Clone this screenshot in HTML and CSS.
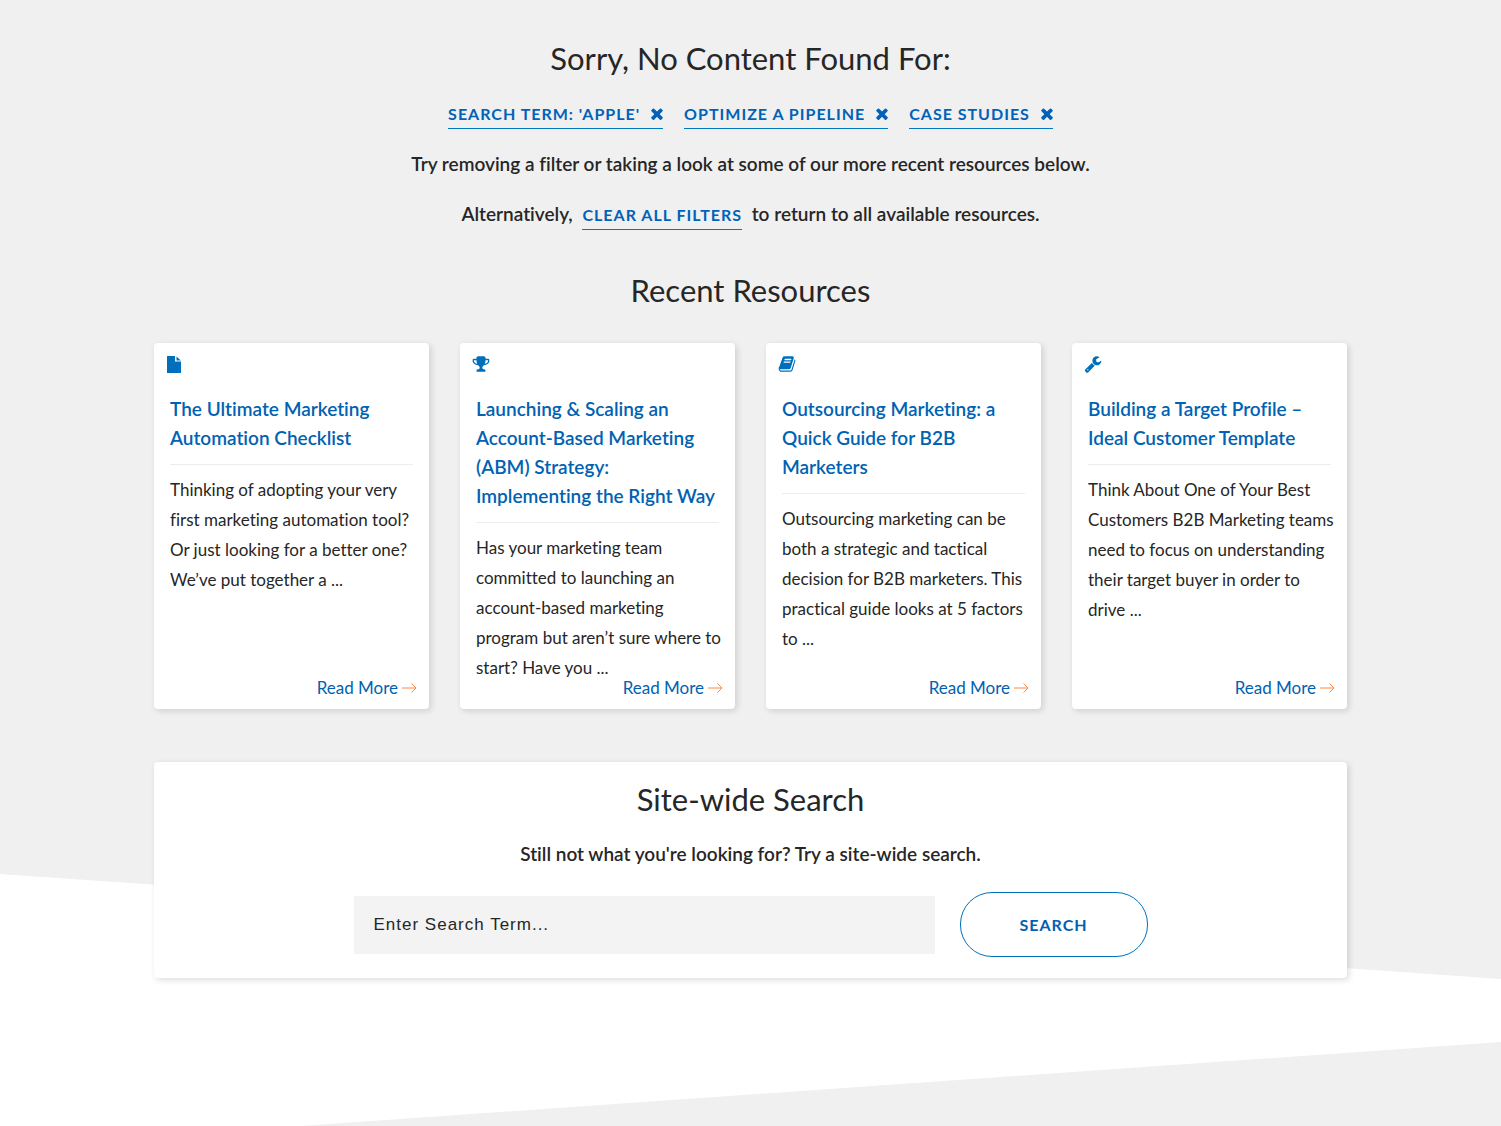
FILE: index.html
```html
<!DOCTYPE html>
<html lang="en">
<head>
<meta charset="utf-8">
<meta name="viewport" content="width=device-width, initial-scale=1">
<title>No Content Found</title>
<link rel="stylesheet" href="styles.css">
</head>
<body>
<svg class="sprite" aria-hidden="true">
  <symbol id="times" viewBox="302 322 1188 1232"><path d="M1490 1322q0 40-28 68l-136 136q-28 28-68 28t-68-28l-294-294-294 294q-28 28-68 28t-68-28l-136-136q-28-28-28-68t28-68l294-294-294-294q-28-28-28-68t28-68l136-136q28-28 68-28t68 28l294 294 294-294q28-28 68-28t68 28l136 136q28 28 28 68t-28 68l-294 294 294 294q28 28 28 68z"/></symbol>
  <symbol id="file" viewBox="0 0 18 18"><path d="M1 1.500a.5.500 0 0 1 .5-.5H9v5.500h6V17.500a.5.500 0 0 1-.5.500h-13a.5.500 0 0 1-.5-.5zM10.500 1.500 14.800 5.500H10.500z"/></symbol>
  <symbol id="trophy" viewBox="0 0 1792 1792"><path d="M522 883q-74-162-74-371h-256v96q0 78 94.500 162t235.500 113zm1078-275v-96h-256q0 209-74 371 141-29 235.500-113t94.500-162zm128-128v128q0 71-41.500 143t-112 130-173 97.500-215.500 44.500q-42 54-95 95-38 34-52.500 72.500t-14.500 89.500q0 54 30.500 91t97.500 37q75 0 133.500 45.500t58.500 114.500v64q0 14-9 23t-23 9h-832q-14 0-23-9t-9-23v-64q0-69 58.500-114.500t133.500-45.500q67 0 97.500-37t30.500-91q0-51-14.500-89.500t-52.500-72.500q-53-41-95-95-113-5-215.500-44.500t-173-97.500-112-130-41.500-143v-128q0-40 28-68t68-28h288v-96q0-66 47-113t113-47h576q66 0 113 47t47 113v96h288q40 0 68 28t28 68z"/></symbol>
  <symbol id="book" viewBox="0 0 1792 1792"><path d="M1703 478q40 57 18 129l-275 906q-19 64-76.500 107.500t-122.500 43.500h-923q-77 0-148.500-53.500t-99.500-131.500q-24-67-2-127 0-4 3-27t4-37q1-8-3-21.500t-3-19.500q2-11 8-21t16.500-23.500 16.500-23.500q23-38 45-91.500t30-91.500q3-10 .5-30t-.5-28q3-11 17-28t17-23q21-36 42-92t25-90q1-9-2.500-32t.5-28q4-13 22-30.500t22-22.500q19-26 42.500-84.500t27.500-96.500q1-8-3-25.500t-2-26.500q2-8 9-18t18-23 17-21q8-12 16.500-30.500t15-35 16-36 19.500-32 26.500-23.500 36-11.500 47.500 5.500l-1 3q38-9 51-9h761q74 0 114 56t18 130l-274 906q-36 119-71.500 153.500t-128.500 34.500h-869q-27 0-38 15-11 16-1 43 24 70 144 70h923q29 0 56-15.500t35-41.500l300-987q7-22 5-57 38 15 59 43zm-1064 2q-4 13 2 22.500t20 9.500h608q13 0 25.500-9.500t16.500-22.500l21-64q4-13-2-22.500t-20-9.500h-608q-13 0-25.500 9.500t-16.500 22.500zm-83 256q-4 13 2 22.500t20 9.500h608q13 0 25.500-9.500t16.500-22.500l21-64q4-13-2-22.500t-20-9.500h-608q-13 0-25.500 9.500t-16.500 22.500z"/></symbol>
  <symbol id="wrench" viewBox="0 0 1792 1792"><path d="M448 1472q0-26-19-45t-45-19-45 19-19 45 19 45 45 19 45-19 19-45zm644-420l-682 682q-37 37-90 37-52 0-91-37l-106-108q-38-36-38-90 0-53 38-91l681-681q39 98 114.500 173.500t173.500 114.500zm634-435q0 39-23 106-47 134-164.500 217.500t-258.500 83.500q-185 0-316.500-131.500t-131.500-316.500 131.500-316.500 316.500-131.500q58 0 121.500 16.500t107.500 46.500q16 11 16 28t-16 28l-293 169v224l193 107q5-3 79-48.500t135.500-81 70.500-35.500q15 0 23.500 10t8.500 25z"/></symbol>
  <symbol id="arrow" viewBox="0 0 15 10"><path d="M0 5H14M9.500 .5 14 5 9.500 9.500"/></symbol>
</svg>

<main class="results">
  <div class="container">
    <h1 class="heading">Sorry, No Content Found For:</h1>
    <ul class="filters">
      <li><a class="tag" href="#">Search Term: 'Apple'<svg class="tag-icon"><use href="#times"/></svg></a></li>
      <li><a class="tag" href="#">Optimize a Pipeline<svg class="tag-icon"><use href="#times"/></svg></a></li>
      <li><a class="tag" href="#">Case Studies<svg class="tag-icon"><use href="#times"/></svg></a></li>
    </ul>
    <p class="note">Try removing a filter or taking a look at some of our more recent resources below.</p>
    <p class="note">Alternatively, <a class="tag clear" href="#">Clear All Filters</a> to return to all available resources.</p>

    <h2 class="heading recent">Recent Resources</h2>
    <div class="cards">
      <article class="card">
        <svg class="card-icon"><use href="#file"/></svg>
        <h3 class="card-title"><a href="#">The Ultimate Marketing Automation Checklist</a></h3>
        <p class="card-text">Thinking of adopting your very first marketing automation tool? Or just looking for a better one? We’ve put together a ...</p>
        <a class="more" href="#">Read More<svg class="arrow"><use href="#arrow"/></svg></a>
      </article>
      <article class="card">
        <svg class="card-icon"><use href="#trophy"/></svg>
        <h3 class="card-title"><a href="#">Launching &amp; Scaling an Account-Based Marketing (ABM) Strategy: Implementing the Right Way</a></h3>
        <p class="card-text">Has your marketing team committed to launching an account-based marketing program but aren’t sure where to start? Have you ...</p>
        <a class="more" href="#">Read More<svg class="arrow"><use href="#arrow"/></svg></a>
      </article>
      <article class="card">
        <svg class="card-icon"><use href="#book"/></svg>
        <h3 class="card-title"><a href="#">Outsourcing Marketing: a Quick Guide for B2B Marketers</a></h3>
        <p class="card-text">Outsourcing marketing can be both a strategic and tactical decision for B2B marketers. This practical guide looks at 5 factors to ...</p>
        <a class="more" href="#">Read More<svg class="arrow"><use href="#arrow"/></svg></a>
      </article>
      <article class="card">
        <svg class="card-icon"><use href="#wrench"/></svg>
        <h3 class="card-title"><a href="#">Building a Target Profile – Ideal Customer Template</a></h3>
        <p class="card-text">Think About One of Your Best Customers B2B Marketing teams need to focus on understanding their target buyer in order to drive ...</p>
        <a class="more" href="#">Read More<svg class="arrow"><use href="#arrow"/></svg></a>
      </article>
    </div>

    <section class="panel">
      <h2 class="heading">Site-wide Search</h2>
      <p class="note">Still not what you're looking for? Try a site-wide search.</p>
      <form class="search">
        <input class="search-input" type="search" placeholder="Enter Search Term..." aria-label="Search term">
        <button class="search-button" type="submit">Search</button>
      </form>
    </section>
  </div>
</main>
<footer class="footer"></footer>
</body>
</html>
```
FILE: styles.css
```css
* {
  box-sizing: border-box;
}

body {
  margin: 0;
  background: #fff;
  color: #262626;
  font-family: Lato, "Open Sans", sans-serif;
  font-size: 17px;
  font-variant-ligatures: none;
  line-height: 30px;
}

.sprite {
  display: none;
}

/* Grey backdrop with a sloped lower edge */
.results {
  position: relative;
  padding: 38px 16px 0;
}

.results::before {
  content: "";
  position: absolute;
  inset: 0 0 -1px;
  z-index: -1;
  background: #f0f0f0;
  clip-path: polygon(0 0, 100% 0, 100% 100%, 0 calc(100% - 7vw));
}

.container {
  max-width: 1193px;
  margin: 0 auto;
}

.heading {
  margin: 0;
  font-size: 31px;
  font-weight: 400;
  line-height: 40px;
  text-align: center;
}

.filters {
  display: flex;
  flex-wrap: wrap;
  justify-content: center;
  gap: 21px;
  margin: 26px 0 20px;
  padding: 0;
  list-style: none;
}

.tag {
  border-bottom: 1px solid #0078c1;
  color: #0062b8;
  font-size: 16px;
  font-weight: 700;
  letter-spacing: 1px;
  text-decoration: none;
  text-transform: uppercase;
}

.filters .tag {
  display: flex;
  align-items: center;
  gap: 11px;
  padding-bottom: 4px;
  line-height: 20px;
}

.tag-icon {
  width: 12px;
  height: 12px;
  fill: #0062b8;
}

.clear {
  margin: 0 5px;
  padding-bottom: 5px;
}

.note {
  margin: 20px 0;
  font-size: 19px;
  font-weight: 600;
  text-align: center;
}

.recent {
  margin: 40px 0 33px;
}

.cards {
  display: grid;
  grid-template-columns: repeat(auto-fit, minmax(260px, 1fr));
  gap: 31px;
}

.card,
.panel {
  border-radius: 4px;
  background: #fff;
  box-shadow: 2px 2px 6px rgba(0, 0, 0, 0.14);
}

.card {
  display: flex;
  flex-direction: column;
  padding: 12px 12px 6px;
}

.card-icon {
  width: 18px;
  height: 18px;
  margin-bottom: 21px;
  fill: #006fbb;
}

.card-title {
  margin: 0 4px 10px;
  padding-bottom: 12px;
  border-bottom: 1px solid #ededed;
  font-size: 19px;
  font-weight: 600;
  line-height: 29px;
}

.card-title a {
  color: #0062b2;
  text-decoration: none;
}

/* The link may share the last text line's row */
.card-text {
  margin: 0 0 -10px 4px;
}

.more {
  display: flex;
  align-items: center;
  align-self: flex-end;
  gap: 4px;
  margin-top: auto;
  color: #0062b2;
  text-decoration: none;
}

.arrow {
  width: 15px;
  height: 10px;
  fill: none;
  stroke: #ff8a3d;
}

.panel {
  margin-top: 53px;
  padding: 17px 16px 21px;
}

.search {
  display: flex;
  align-items: center;
  gap: 25px;
  max-width: 794px;
  margin: 23px auto 0;
}

.search-input {
  flex: 1;
  min-width: 0;
  height: 58px;
  padding: 0 20px;
  border: 0;
  background: #f3f3f3;
  font-family: "Liberation Sans", Arial, sans-serif;
  font-size: 17px;
  letter-spacing: 1px;
}

.search-input::placeholder {
  color: #262626;
}

.search-button {
  width: 188px;
  height: 65px;
  border: 1px solid #0072bc;
  border-radius: 32px;
  background: #fff;
  color: #0062b2;
  font: 700 16px Lato, "Open Sans", sans-serif;
  letter-spacing: 1px;
  text-transform: uppercase;
}

.footer {
  min-height: 84px;
  margin-top: 64px;
  background: #f0f0f0;
  clip-path: polygon(0 7vw, 100% 0, 100% 100%, 0 100%);
}
```
